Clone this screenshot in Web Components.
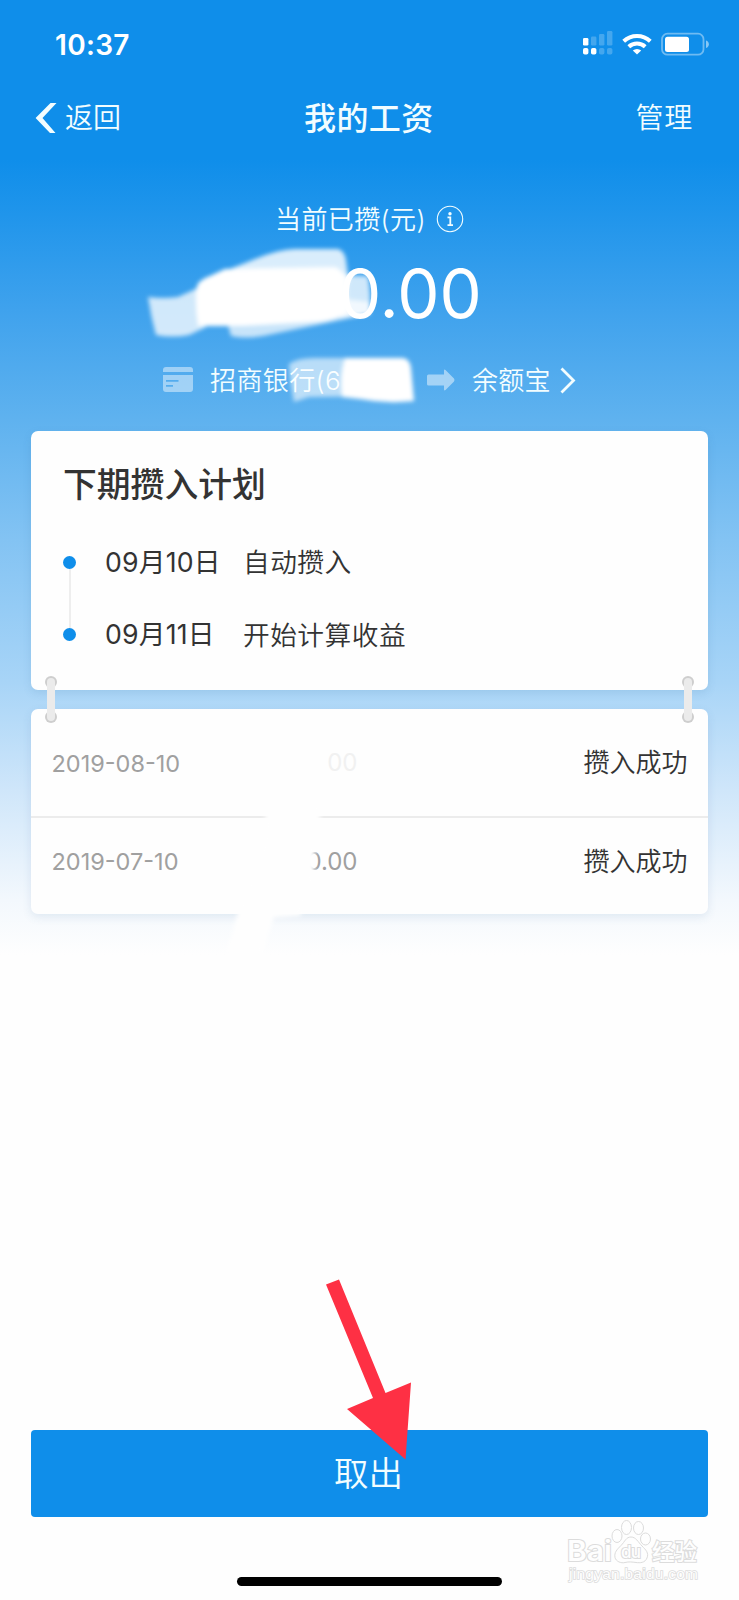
<!DOCTYPE html>
<html lang="zh-CN">
<head>
<meta charset="utf-8">
<title>我的工资</title>
<style>
    body {
        margin: 0;
        background: #fefefe;
    }
</style>
</head>
<body>
<salary-page>
    <status-bar time="10:37"></status-bar>
    <nav-bar back="返回" action="管理">我的工资</nav-bar>
    <balance-summary></balance-summary>
    <plan-card heading="下期攒入计划">
        <plan-step date="09月10日">自动攒入</plan-step>
        <plan-step date="09月11日" last>开始计算收益</plan-step>
    </plan-card>
    <record-list>
        <record-row date="2019-08-10" amount="00" faded>攒入成功</record-row>
        <record-row date="2019-07-10" amount="0.00">攒入成功</record-row>
    </record-list>
    <action-button>取出</action-button>
    <page-footer></page-footer>
</salary-page>

<script>
class BaseItem extends HTMLElement {

    constructor() {
        super();
        this.shadowDOM = this.attachShadow({ mode: "open" });
    }

    connectedCallback() {
        this.render();
    }

    attr(name) {
        return this.getAttribute(name) || "";
    }
}

class SalaryPage extends BaseItem {

    render() {
        this.shadowDOM.innerHTML = `
        <style>
            :host {
                display: flex;
                flex-direction: column;
                position: relative;
                width: 739px;
                height: 1600px;
                overflow: hidden;
                font-family: Inter, "Noto Sans CJK SC", sans-serif;
                color: #333;
                background: linear-gradient(180deg,
                    #0f8eea 0, #0f8eea 160px, #2095eb 215px, #3fa2ed 310px,
                    #5fb2ef 420px, #83c3f3 540px, #a7d4f7 680px,
                    #cfe6fa 790px, #f3f8fd 900px, #fefefe 955px);
            }
        </style>
        <slot></slot>
        `;
    }
}

class StatusBar extends BaseItem {

    render() {
        this.shadowDOM.innerHTML = `
        <style>
            :host {
                display: flex;
                align-items: center;
                justify-content: space-between;
                height: 88px;
                padding: 0 30px 0 55px;
                box-sizing: border-box;
                color: white;
            }

            .time {
                font-size: 28px;
                font-weight: 600;
                letter-spacing: 0.3px;
                padding-top: 1px;
            }

            .icons {
                display: flex;
            }
        </style>
        <span class="time">${this.attr("time")}</span>
        <span class="icons">
            <svg width="127" height="26" viewBox="582 31 127 26" fill="white">
                <!-- two rows of cellular bars -->
                <rect x="583" y="38" width="5.4" height="7.6" rx="1.3"/>
                <g opacity=".22">
                    <rect x="591" y="36.5" width="5.4" height="9.1" rx="1.3"/>
                    <rect x="599" y="34" width="5.4" height="11.6" rx="1.3"/>
                    <rect x="607" y="31" width="5.4" height="14.6" rx="1.3"/>
                    <rect x="599" y="48" width="5.4" height="6.6" rx="1.8"/>
                    <rect x="607" y="48" width="5.4" height="6.6" rx="1.8"/>
                </g>
                <rect x="583" y="48" width="5.4" height="6.6" rx="1.8"/>
                <rect x="591" y="48" width="5.4" height="6.6" rx="1.8"/>
                <!-- wifi -->
                <g fill="none" stroke="white" stroke-width="4">
                    <path d="M623.7 41.3a19.4 19.4 0 0 1 26.6 0"/>
                    <path d="M628.8 46.7a12 12 0 0 1 16.4 0"/>
                </g>
                <path d="M632.8 50.6a6 6 0 0 1 8.4 0L637 54.6z"/>
                <!-- battery -->
                <rect x="662" y="33.7" width="41.5" height="21" rx="5.5" fill="none" stroke="white" stroke-opacity=".4" stroke-width="1.8"/>
                <rect x="665" y="36.7" width="24" height="15.3" rx="2.5"/>
                <path d="M706 40.5c3.8 1.2 3.8 6.3 0 7.5z" opacity=".5"/>
            </svg>
        </span>
        `;
    }
}

class NavBar extends BaseItem {

    render() {
        this.shadowDOM.innerHTML = `
        <style>
            :host {
                display: grid;
                grid-template-columns: 1fr 130px 1fr;
                align-items: center;
                height: 60px;
                padding: 0 46px 0 35px;
                box-sizing: border-box;
                color: #f2fdff;
                font-size: 28px;
                font-weight: 350;
            }

            .back {
                display: flex;
                align-items: center;
                gap: 8px;
            }

            .back span {
                margin-top: -4px;
            }

            .title {
                font-size: 32px;
                font-weight: 500;
                letter-spacing: 0.4px;
                margin: -4px -5px 0 5px;
                white-space: nowrap;
            }

            .action {
                justify-self: end;
                margin-top: -5px;
                letter-spacing: 0.8px;
            }
        </style>
        <span class="back">
            <svg width="22" height="32" viewBox="0 0 22 32"><path d="M15.5 1H21.500L7.500 16l13 15H15L.6 16z" fill="#f2fdff"/></svg>
            <span>${this.attr("back")}</span>
        </span>
        <span class="title"><slot></slot></span>
        <span class="action">${this.attr("action")}</span>
        `;
    }
}

class BalanceSummary extends BaseItem {

    render() {
        this.shadowDOM.innerHTML = `
        <style>
            :host {
                display: block;
                position: relative;
                height: 283px;
                padding: 51px 0 0;
                box-sizing: border-box;
                color: #f2fdff;
                font-size: 26px;
                font-weight: 350;
            }

            .label, .bank, .amount {
                display: flex;
                align-items: center;
                position: relative;
                height: 40px;
                white-space: nowrap;
            }

            .label span, .bank span {
                margin-top: -4px;
            }

            .label {
                padding-left: 275px;
                gap: 10px;
                letter-spacing: 0.4px;
            }

            .amount {
                height: 80px;
                margin-top: 14px;
                padding-left: 339px;
                color: white;
                font-size: 67px;
                font-weight: 400;
            }

            .bank {
                margin-top: 27px;
                padding-left: 163px;
            }

            .name {
                width: 217px;
                margin-left: 17px;
                letter-spacing: 0.4px;
            }

            .target {
                margin: 0 9px 0 17px;
                letter-spacing: 0.3px;
            }

            /* eraser strokes lie over the whole block */
            .smear {
                position: absolute;
                left: 0;
                top: 0;
            }
        </style>
        <svg class="smear" width="739" height="283" viewBox="0 148 739 283" fill="white">
            <defs><filter id="soft"><feGaussianBlur stdDeviation="2"/></filter></defs>
            <g filter="url(#soft)">
                <path d="M148 297q15 2 30 0l22-10 6 40-17 8q-17 3-33 0-5-18-8-38z" opacity=".76"/>
                <path d="M210 277l45-18q25-10 40-10h43q7 2 8 12l3 22-90 10z" opacity=".82"/>
                <path d="M226 318l5 18q15 3 32 0l107-22 0-12-70-8z" opacity=".7"/>
                <path d="M340 275l28 1q3 18 2 37l-30 5z" opacity=".76"/>
                <path d="M196 290q1-10 14-14l15-7 110-2q12 5 12 20l1 25q-10 8-30 10l-75 4-45 0q-3-18-2-36z"/>
            </g>
        </svg>
        <div class="label">
            <span>当前已攒(元)</span>
            <svg width="28" height="28" viewBox="0 0 28 28">
                <circle cx="14" cy="14" r="12.7" fill="none" stroke="#f2fdff" stroke-width="1.1"/>
                <circle cx="14" cy="8.7" r="1.7" fill="#f2fdff"/>
                <path d="M11.5 12.3h2.8V20M11.5 20.2h5.500" fill="none" stroke="#f2fdff" stroke-width="1.8"/>
            </svg>
        </div>
        <div class="amount">0.00</div>
        <div class="bank">
            <svg width="30" height="26" viewBox="0 0 30 26" fill="white" fill-opacity=".45">
                <path d="M3 0h24q3 0 3 3v2H0V3q0-3 3-3z"/>
                <path fill-rule="evenodd" d="M0 8h30v14q0 3-3 3H3q-3 0-3-3zM3 13h12.5v1.7H3zM3 18h7v1.7H3z"/>
            </svg>
            <span class="name">招商银行(6</span>
            <svg width="28" height="22" viewBox="0 0 28 22"><path d="M1.5 5.5H17V1.5Q17 0 18.5 1L27 9.5q1 1.5 0 3L18.5 21Q17 22 17 20.5V16.5H1.5Q0 16.5 0 15v-8Q0 5.5 1.5 5.5z" fill="white" fill-opacity=".47"/></svg>
            <span class="target">余额宝</span>
            <svg width="16" height="27" viewBox="0 0 16 27"><path d="M1.5 1.5L13.5 13.5 1.5 25.5" fill="none" stroke="#f2fdff" stroke-width="2.8"/></svg>
        </div>
        <svg class="smear" width="739" height="283" viewBox="0 148 739 283" fill="white">
            <g filter="url(#soft)">
                <path d="M289 364q8-6 25-6h70v38l-75 1-15 5q-4-20-5-38z" opacity=".6"/>
                <path d="M345 358h58q7 1 8 10l3 33q-28 3-54-2l-18-2q-3-22 3-39z"/>
            </g>
        </svg>
        `;
    }
}

class PlanCard extends BaseItem {

    render() {
        this.shadowDOM.innerHTML = `
        <style>
            :host {
                display: block;
                position: relative;
                height: 259px;
                margin: 0 31px;
                padding: 29px 32px 0;
                box-sizing: border-box;
                border-radius: 7px;
                background: #fefefe;
                box-shadow: 0 3px 8px rgba(60,110,160,0.14);
            }

            .heading {
                height: 50px;
                line-height: 50px;
                margin-bottom: 16px;
                font-size: 33.8px;
                font-weight: 450;
            }

            /* straps that tie this card to the one below */
            .strap {
                position: absolute;
                top: 245px;
                z-index: 1;
            }

            .left { left: 14px; }
            .right { right: 14px; }
        </style>
        <div class="heading">${this.attr("heading")}</div>
        <slot></slot>
        ${["left", "right"].map(side => `
        <svg class="strap ${side}" width="12" height="47" viewBox="0 0 12 47">
            <circle cx="6" cy="6" r="6" fill="#cecece"/>
            <circle cx="6" cy="41" r="6" fill="#cecece"/>
            <rect x="2" y="2" width="8" height="43" rx="4" fill="#ebebeb"/>
        </svg>`).join("")}
        `;
    }
}

class PlanStep extends BaseItem {

    render() {
        this.shadowDOM.innerHTML = `
        <style>
            :host {
                display: flex;
                position: relative;
                align-items: center;
                height: 72.5px;
                font-size: 26.7px;
                font-weight: 350;
                letter-spacing: 0.5px;
                white-space: nowrap;
            }

            .dot {
                width: 13px;
                height: 13px;
                border-radius: 50%;
                background: #0f8eea;
            }

            .line {
                position: absolute;
                left: 5.5px;
                top: 43px;
                width: 2px;
                height: 59px;
                background: #eee;
            }

            :host([last]) .line {
                display: none;
            }

            .date {
                width: 138px;
                margin: -4px 0 0 29px;
                font-weight: 400;
                letter-spacing: 0.2px;
            }

            :host([last]) .date {
                margin-top: -5px;
            }

            .text {
                margin-top: -3px;
            }

            :host([last]) .text {
                margin-top: -2px;
            }
        </style>
        <span class="dot"></span><span class="line"></span>
        <span class="date">${this.attr("date")}</span>
        <span class="text"><slot></slot></span>
        `;
    }
}

class RecordList extends BaseItem {

    render() {
        this.shadowDOM.innerHTML = `
        <style>
            :host {
                display: block;
                position: relative;
                height: 205px;
                margin: 19px 31px 0;
                border-radius: 7px;
                background: #fefefe;
                box-shadow: 0 3px 10px rgba(60,110,160,0.12);
            }

            .smear {
                position: absolute;
                left: 170px;
                top: 30px;
            }
        </style>
        <slot></slot>
        <svg class="smear" width="160" height="220" viewBox="201 739 160 220" fill="#fefefe">
            <defs><filter id="soft"><feGaussianBlur stdDeviation="2"/></filter></defs>
            <g filter="url(#soft)">
                <path d="M266 805L322 805 315 850 314 885 300 916 274 918 262 955 226 955 240 905 264 840z"/>
            </g>
        </svg>
        `;
    }
}

class RecordRow extends BaseItem {

    render() {
        this.shadowDOM.innerHTML = `
        <style>
            :host {
                display: grid;
                grid-template-columns: 200px 106px 1fr;
                align-items: center;
                height: 86px;
                padding: 0 20.5px;
                color: #333;
                font-size: 26px;
                font-weight: 350;
            }

            :host(:first-of-type) {
                height: 109px;
                border-bottom: 2px solid #ececec;
                box-sizing: border-box;
            }

            .date, .amount {
                color: #a0a0a0;
                font-size: 23.5px;
                font-weight: 400;
                padding-top: 1px;
            }

            .amount {
                padding-top: 0;
                font-size: 24px;
                text-align: right;
            }

            :host([faded]) .amount {
                color: #f1f1f1;
            }

            .state {
                text-align: right;
                margin-top: -4px;
            }
        </style>
        <span class="date">${this.attr("date")}</span>
        <span class="amount">${this.attr("amount")}</span>
        <span class="state"><slot></slot></span>
        `;
    }
}

class ActionButton extends BaseItem {

    render() {
        this.shadowDOM.innerHTML = `
        <style>
            :host {
                display: flex;
                position: relative;
                align-items: center;
                justify-content: center;
                height: 87px;
                margin: 516px 31px 0;
                padding: 0 2px 5px 0;
                box-sizing: border-box;
                border-radius: 4px;
                color: #f2fdff;
                font-size: 34.5px;
                font-weight: 350;
                background: #0f8eea;
            }

            .pointer {
                position: absolute;
                left: 289px;
                top: -155px;
            }
        </style>
        <slot></slot>
        <svg class="pointer" width="100" height="190" viewBox="320 1275 100 190">
            <path d="M326 1284.5L339 1279.5 385.5 1393 411 1382.5 405.5 1459.5 347 1409 373 1398z" fill="#fe3044"/>
        </svg>
        `;
    }
}

class PageFooter extends BaseItem {

    render() {
        this.shadowDOM.innerHTML = `
        <style>
            :host {
                display: block;
                position: relative;
                height: 83px;
                padding: 60px 0 0 237px;
                box-sizing: border-box;
            }

            .home {
                width: 265px;
                height: 9px;
                border-radius: 5px;
                background: black;
            }

            /* site mark printed over the corner */
            .mark {
                position: absolute;
                left: 560px;
                top: 0;
                fill: #fefefe;
                stroke: #dcdcdc;
                stroke-width: 1;
            }

            .mark text {
                paint-order: stroke;
                stroke-width: 2;
            }
        </style>
        <svg class="mark" width="150" height="78" viewBox="560 1517 150 78">
            <text x="567" y="1561" font-family="Inter" font-size="28" font-weight="600" textLength="45" lengthAdjust="spacingAndGlyphs">Bai</text>
            <ellipse cx="617" cy="1536" rx="5" ry="6.5"/>
            <ellipse cx="626.5" cy="1527.5" rx="5" ry="7"/>
            <ellipse cx="638.5" cy="1528" rx="5" ry="6.5"/>
            <ellipse cx="645.5" cy="1539" rx="5" ry="6"/>
            <path d="M631 1537c5 0 7 5 11 9s7 7 5 12-7 5-11 4.5-7-1-11 0-9-1-10-5c-1-5 2-8 6-12s5-8.5 10-8.5z"/>
            <text x="621" y="1558" font-family="Inter" font-size="17" font-weight="500" textLength="20">du</text>
            <text x="652" y="1560" font-family="Noto Sans CJK SC" font-size="22.5" font-weight="500" textLength="45">经验</text>
            <text x="569" y="1579" font-family="Liberation Sans" font-size="15.5" textLength="129" style="stroke-width: 1.6">jingyan.baidu.com</text>
        </svg>
        <div class="home"></div>
        `;
    }
}

customElements.define("salary-page", SalaryPage);
customElements.define("status-bar", StatusBar);
customElements.define("nav-bar", NavBar);
customElements.define("balance-summary", BalanceSummary);
customElements.define("plan-card", PlanCard);
customElements.define("plan-step", PlanStep);
customElements.define("record-list", RecordList);
customElements.define("record-row", RecordRow);
customElements.define("action-button", ActionButton);
customElements.define("page-footer", PageFooter);
</script>
</body>
</html>
